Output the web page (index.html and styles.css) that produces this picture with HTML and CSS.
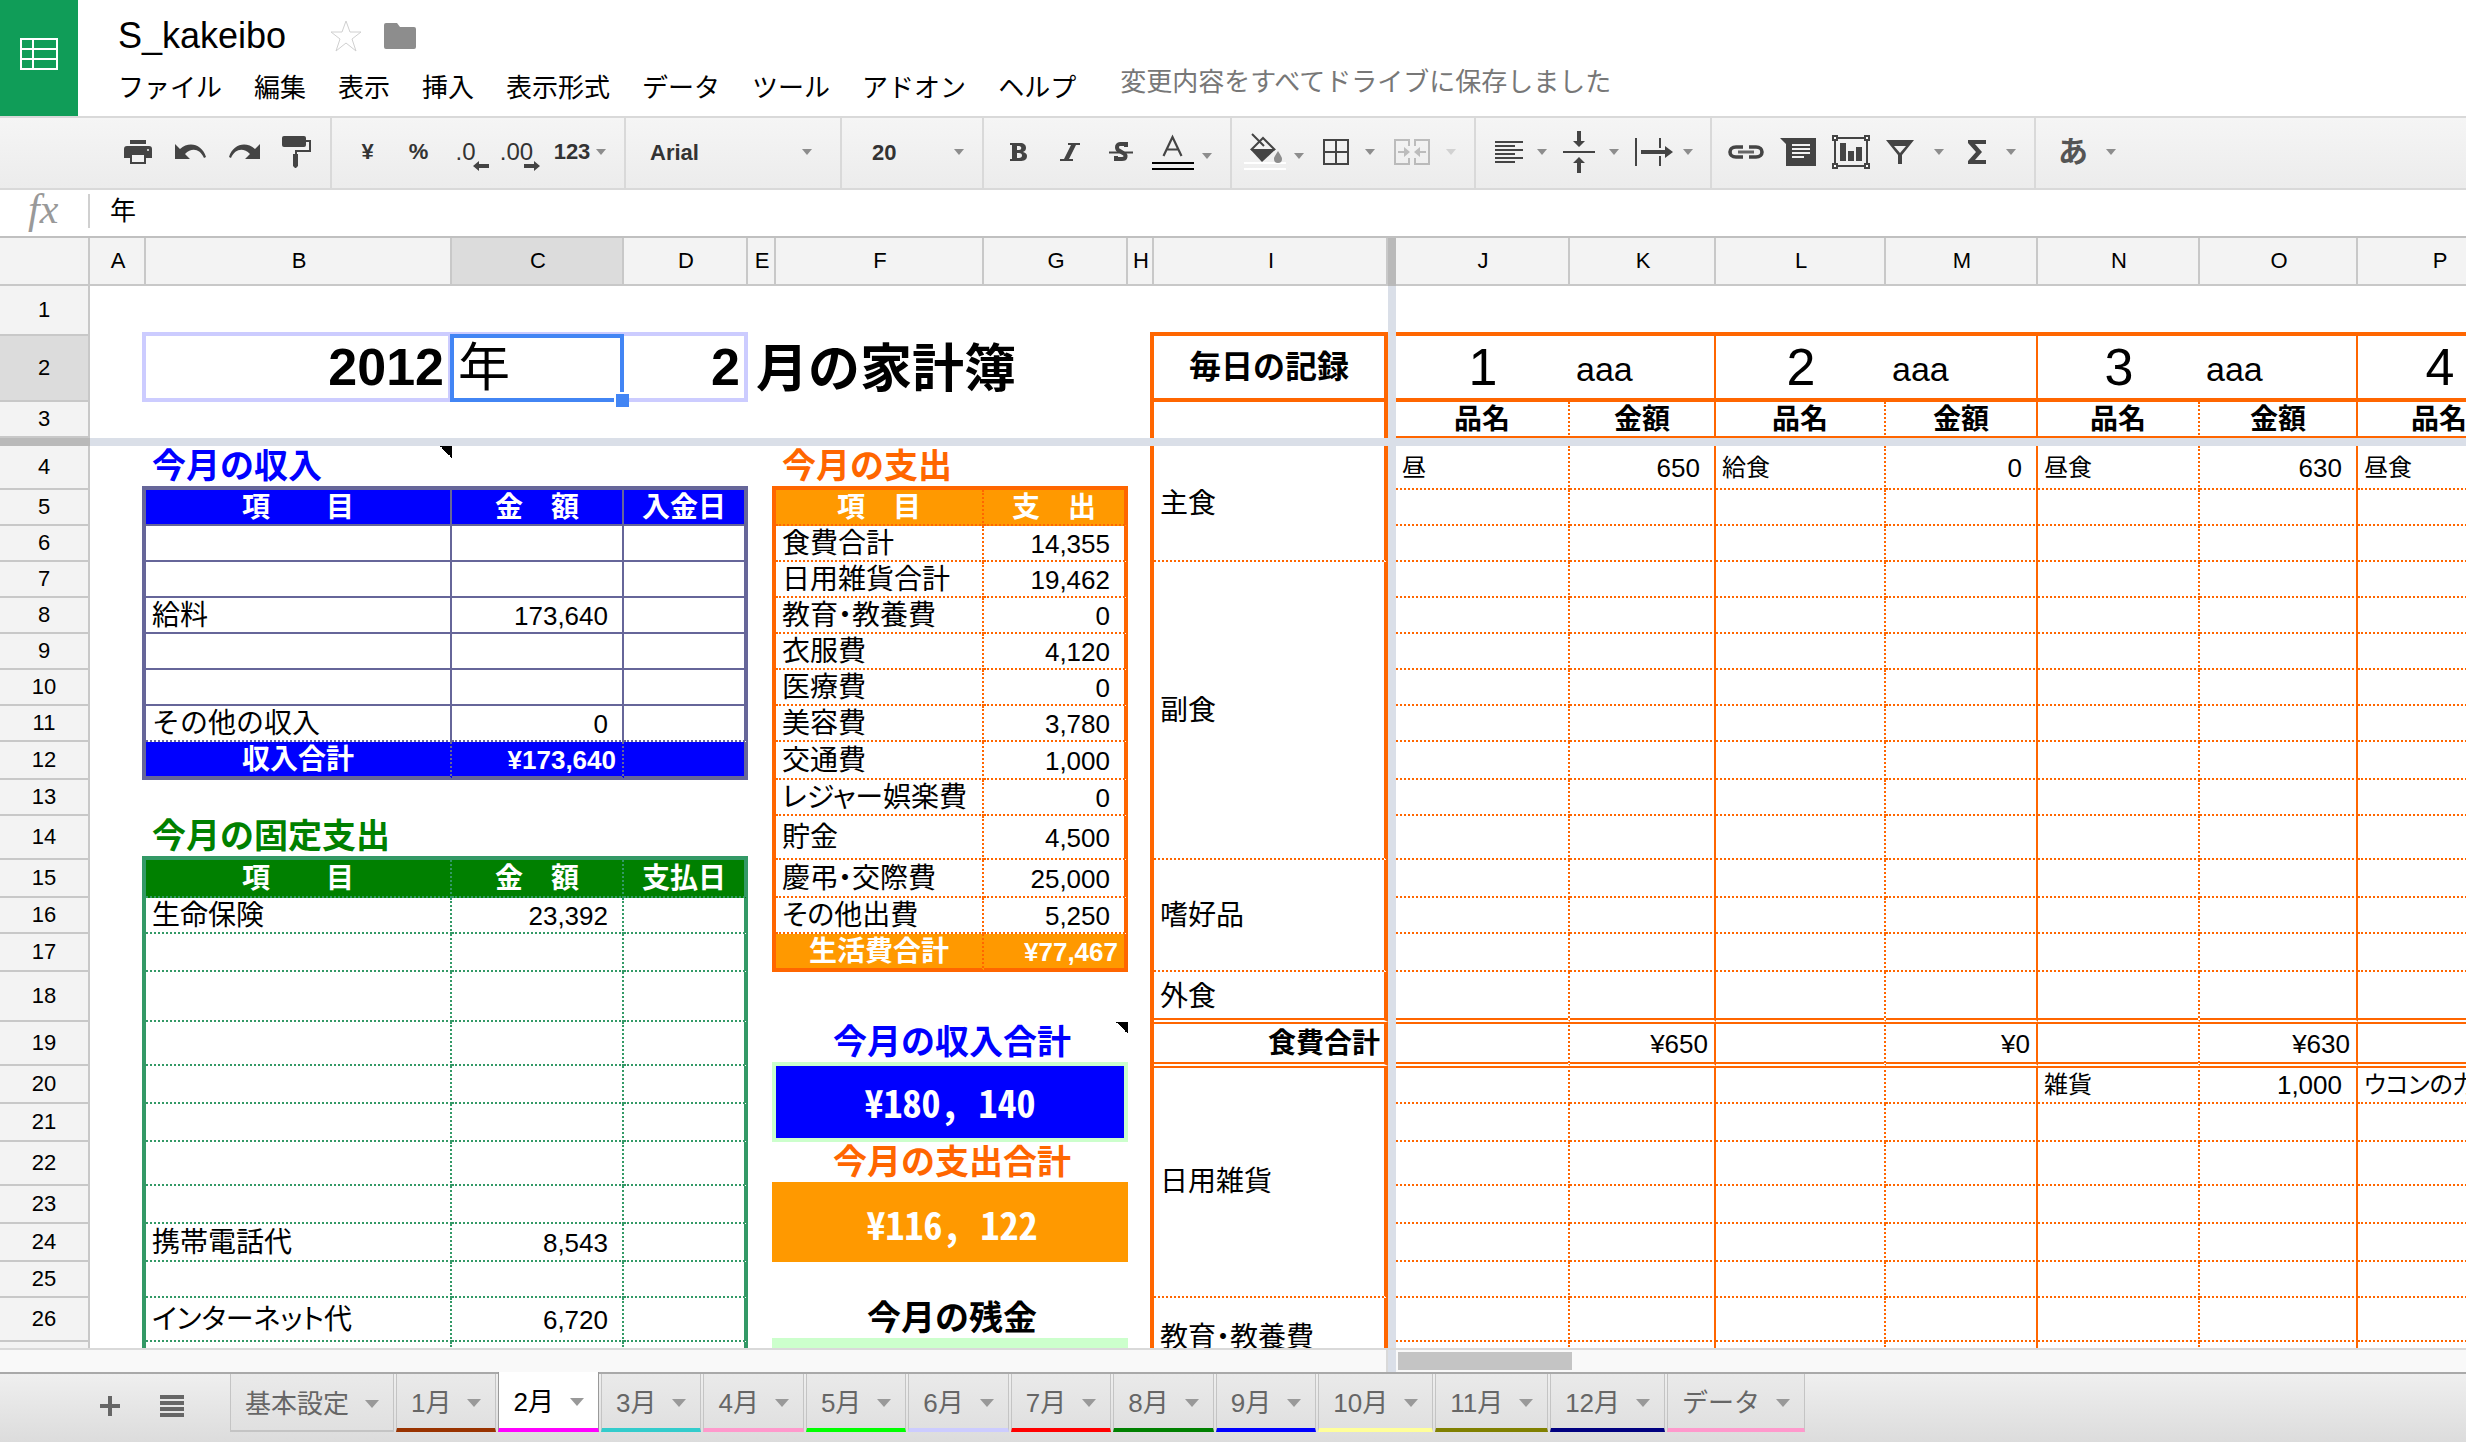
FILE: index.html
```html
<!DOCTYPE html>
<html lang="ja">
<head>
<meta charset="utf-8">
<title>S_kakeibo</title>
<link rel="stylesheet" href="styles.css">
</head>
<body>
<header class="top">
  <a class="home" href="#" aria-label="ホーム">
    <svg width="38" height="32" viewBox="0 0 38 32"><path d="M1 1h36v30H1zM1 11h36M1 21h36M13 1v30" fill="none" stroke="#fff" stroke-width="2"/></svg>
  </a>
  <div class="head">
    <div class="title-row">
      <h1>S_kakeibo</h1>
      <button class="plain" aria-label="スター"><svg width="32" height="32" viewBox="0 0 32 32"><path d="M16 1l4 11h11l-9 7 4 12-10-8-10 8 4-12-9-7h11z" fill="#fff" stroke="#d0d0d0" stroke-width="1"/></svg></button>
      <button class="plain" aria-label="フォルダ"><svg width="32" height="26" viewBox="0 0 32 26"><path d="M2 0h11l3 4h14a2 2 0 0 1 2 2v18a2 2 0 0 1-2 2H2a2 2 0 0 1-2-2V2a2 2 0 0 1 2-2z" fill="#8d8d8d"/></svg></button>
    </div>
    <nav class="menu">
      <button>ファイル</button><button>編集</button><button>表示</button><button>挿入</button><button>表示形式</button><button>データ</button><button>ツール</button><button>アドオン</button><button>ヘルプ</button>
      <span class="saved">変更内容をすべてドライブに保存しました</span>
    </nav>
  </div>
</header>

<div class="toolbar">
  <div class="group g-file">
    <button aria-label="印刷"><svg width="28" height="24" viewBox="0 0 28 24"><path d="M6 0h16v4H6zM3 6h22a3 3 0 0 1 3 3v9h-6v-4H6v4H0V9a3 3 0 0 1 3-3z" fill="#444"/><path d="M7 14h14v9H7z" fill="#f3f3f3" stroke="#444" stroke-width="2"/><circle cx="24" cy="10" r="1" fill="#f3f3f3"/></svg></button>
    <button aria-label="元に戻す"><svg width="32" height="16" viewBox="0 0 32 16"><path d="M0 0l5 5C14-3 27 0 31 13l-2 1C25 5 17 3 10 10l5 5H0z" fill="#444"/></svg></button>
    <button aria-label="やり直し"><svg width="32" height="16" viewBox="0 0 32 16"><path d="M32 0l-5 5C18-3 5 0 1 13l2 1C7 5 15 3 22 10l-5 5h15z" fill="#444"/></svg></button>
    <button aria-label="書式を貼り付け"><svg width="30" height="32" viewBox="0 0 30 32"><path d="M2 0h20a2 2 0 0 1 2 2v7a2 2 0 0 1-2 2H2a2 2 0 0 1-2-2V2a2 2 0 0 1 2-2z" fill="#444"/><path d="M24 5h4v10H14v4" fill="none" stroke="#444" stroke-width="2"/><path d="M11 18h5v12l-2 2h-1l-2-2z" fill="#444"/></svg></button>
  </div>
  <div class="group g-num">
    <button>¥</button>
    <button>%</button>
    <button class="dec" aria-label="小数点以下の桁数を減らす">.0<svg width="16" height="10" viewBox="0 0 16 10"><path d="M0 5l6-5v3h10v4H6v3z" fill="#444"/></svg></button>
    <button class="dec" aria-label="小数点以下の桁数を増やす">.00<svg width="16" height="10" viewBox="0 0 16 10"><path d="M16 5l-6-5v3H0v4h10v3z" fill="#444"/></svg></button>
    <button class="fmt">123<i class="arr"></i></button>
  </div>
  <div class="group"><label class="pick font"><select aria-label="フォント"><option>Arial</option></select><i class="arr"></i></label></div>
  <div class="group"><label class="pick size"><select aria-label="フォントサイズ"><option>20</option></select><i class="arr"></i></label></div>
  <div class="group g-text">
    <button aria-label="太字"><svg width="18" height="20" viewBox="0 0 18 20"><path fill-rule="evenodd" d="M0 1h10c4 0 6 2 6 5 0 2-1 3-3 4 3 1 4 2 4 4 0 4-3 5-7 5H0v-2h2V3H0zM7 4v4h2c3 0 3-4 0-4zM7 11v5h2c4 0 4-5 0-5z" fill="#444"/></svg></button>
    <button aria-label="斜体"><svg width="20" height="18" viewBox="0 0 20 18"><path d="M8 0h12v2h-4L9 16h4v2H0v-2h4L11 2H8z" fill="#444"/></svg></button>
    <button aria-label="取り消し線"><svg width="24" height="20" viewBox="0 0 24 20"><path d="M17 5V2h-6c-4 0-4 6 0 7l3 2c4 2 3 6-1 6H7v-3" fill="none" stroke="#444" stroke-width="4"/><path d="M0 9.500h24v2H0z" fill="#444"/></svg></button>
    <button class="drop low" aria-label="テキストの色"><svg width="36" height="36" viewBox="0 0 36 36"><path d="M11.500 22L20.500 3L29.500 22M14.500 15.500h12" fill="none" stroke="#444" stroke-width="2.200"/><path d="M0 28h42v2H0zM0 34h42v2H0z"/></svg><i class="arr"></i></button>
  </div>
  <div class="group g-fill">
    <button class="drop low" aria-label="塗りつぶしの色"><svg width="36" height="36" viewBox="0 0 36 36"><path d="M0 28h42v2H0zM0 34h42v2H0z" fill="#fff"/><path d="M6 15h26L18 28z" fill="#444"/><path d="M7 16L19 4l12 12M8 0l12 12" fill="none" stroke="#444" stroke-width="2"/><path d="M34 17c3 5 4 6 4 8a4 4 0 0 1-8 0c0-2 1-3 4-8z" fill="#8d8d8d"/></svg><i class="arr"></i></button>
    <button class="drop" aria-label="枠線"><svg width="28" height="26" viewBox="0 0 28 26"><path d="M1 1h24v24H1zM13 1v24M1 13h24" fill="none" stroke="#444" stroke-width="2"/></svg><i class="arr"></i></button>
    <button class="drop off" disabled aria-label="セルを結合"><svg width="38" height="26" viewBox="0 0 38 26"><path d="M15 7V1H1v24h14v-6M21 7V1h14v24H21v-6M4 13h7M32 13h-7" fill="none" stroke="#444" stroke-width="2"/><path d="M10 8l6 5-6 5zM26 8l-6 5 6 5z" fill="#444"/></svg><i class="arr"></i></button>
  </div>
  <div class="group g-align">
    <button class="drop" aria-label="横方向の配置"><svg width="28" height="22" viewBox="0 0 28 22"><path d="M0 1h28M0 5h20M0 9h28M0 13h20M0 17h28M0 21h20" stroke="#444" stroke-width="2"/></svg><i class="arr"></i></button>
    <button class="drop" aria-label="縦方向の配置"><svg width="32" height="42" viewBox="0 0 32 42"><path d="M0 20h32v2H0zM14 0h4v10h4l-6 6-6-6h4zM14 42h4V32h4l-6-6-6 6h4z" fill="#444"/></svg><i class="arr"></i></button>
    <button class="drop" aria-label="テキストの折り返し"><svg width="34" height="28" viewBox="0 0 34 28"><path d="M0 0h2v28H0zM24 0h2v10h-2zM24 18h2v10h-2zM6 12h24V8l8 6-8 6v-4H6z" fill="#444"/></svg><i class="arr"></i></button>
  </div>
  <div class="group g-insert">
    <button aria-label="リンクを挿入"><svg width="36" height="14" viewBox="0 0 36 14"><path d="M15 2H8C0 2 0 12 8 12h7M21 2h7c8 0 8 10 0 10h-7" fill="none" stroke="#444" stroke-width="3.600"/><path d="M10 5.500h16v3H10z" fill="#666"/></svg></button>
    <button aria-label="コメントを挿入"><svg width="36" height="28" viewBox="0 0 36 28"><path d="M0 0h36v28H6V6z" fill="#444"/><path d="M12 7h18M12 11h18M12 15h18M12 19h12" stroke="#f3f3f3" stroke-width="2"/></svg></button>
    <button aria-label="グラフを挿入"><svg width="38" height="34" viewBox="0 0 38 34"><path d="M3 3h32v28H3z" fill="none" stroke="#444" stroke-width="2"/><path d="M8 8h6v18H8zM16 16h6v10h-6zM24 12h6v14h-6z" fill="#444"/><path d="M1 1h4v4H1zM33 1h4v4h-4zM1 29h4v4H1zM33 29h4v4h-4z" fill="#fff" stroke="#444" stroke-width="2"/></svg></button>
    <button class="drop" aria-label="フィルタ"><svg width="34" height="24" viewBox="0 0 34 24"><path fill-rule="evenodd" d="M0 0h28L16 15v9h-4v-9zM8 6l6 7 6-7z" fill="#444"/></svg><i class="arr"></i></button>
    <button class="drop" aria-label="関数"><svg width="32" height="24" viewBox="0 0 32 24"><path d="M8 0h18v4H15l7 8-7 8h11v4H8v-3l8-9-8-9z" fill="#444"/></svg><i class="arr"></i></button>
  </div>
  <div class="group g-input"><button class="drop kana" aria-label="入力ツール"><span>あ</span><i class="arr"></i></button></div>
</div>

<div class="formula">
  <label for="fx">fx</label>
  <input id="fx" value="年">
</div>

<main class="sheet">
<table>
<colgroup><col class="w-head"><col class="w-a"><col class="w-b"><col class="w-c"><col class="w-d"><col class="w-e"><col class="w-f"><col class="w-g"><col class="w-h"><col class="w-i"><col class="w-fz"><col class="w-j"><col class="w-k"><col class="w-l"><col class="w-m"><col class="w-n"><col class="w-o"><col class="w-p"></colgroup>
<thead>
<tr><th></th><th>A</th><th>B</th><th class="sel">C</th><th>D</th><th>E</th><th>F</th><th>G</th><th>H</th><th>I</th><th class="fz"></th><th>J</th><th>K</th><th>L</th><th>M</th><th>N</th><th>O</th><th>P</th></tr>
</thead>
<tbody>
<tr class="h50 r1"><th>1</th><td class="corner t-lav"></td><td class="b4 lav"></td><td class="b4 lav"></td><td class="b4 lav"></td><td></td><td></td><td></td><td class="corner orange"></td><td class="b4 org"></td><td class="fz"></td><td></td><td></td><td></td><td></td><td></td><td></td><td></td></tr>
<tr class="h66 r2"><th class="sel">2</th><td class="r4 lav"></td><td class="b4 r4 lav num">2012</td><td class="cur b4 lav">年<i class="cursor"></i><i class="handle"></i></td><td class="b4 r4 lav num">2</td><td class="over" colspan="3">月の家計簿</td><td class="r4 org"></td><td class="daily b4 r4 org">毎日の記録</td><td class="fz"></td><td>1</td><td>aaa</td><td>2</td><td>aaa</td><td>3</td><td>aaa</td><td>4</td></tr>
<tr class="h36 r3 day"><th>3</th><td></td><td></td><td></td><td></td><td></td><td></td><td></td><td class="r4 org"></td><td class="r4 org"></td><td class="fz"></td><td>品名</td><td>金額</td><td>品名</td><td>金額</td><td>品名</td><td>金額</td><td>品名</td></tr>
<tr class="h8 freeze"><th></th><td colspan="17"></td></tr>
<tr class="h44 day"><th>4</th><td class="corner t-navy"></td><td class="cap blue b4 navy note">今月の収入</td><td class="b4 navy"></td><td class="b4 navy"></td><td class="corner orange"></td><td class="cap orange b4 org">今月の支出</td><td class="b4 org"></td><td class="r4 org"></td><td class="cat" rowspan="3">主食</td><td class="fz"></td><td>昼</td><td>650</td><td>給食</td><td>0</td><td>昼食</td><td>630</td><td>昼食</td></tr>
<tr class="h36 inc exp hd day"><th>5</th><td></td><td>項　　目</td><td>金　額</td><td>入金日</td><td></td><td>項　目</td><td>支　出</td><td class="r4 org"></td><td class="fz"></td><td></td><td></td><td></td><td></td><td></td><td></td><td></td></tr>
<tr class="h36 inc exp day"><th>6</th><td></td><td></td><td></td><td></td><td></td><td>食費合計</td><td>14,355</td><td class="r4 org"></td><td class="fz"></td><td></td><td></td><td></td><td></td><td></td><td></td><td></td></tr>
<tr class="h36 inc exp day"><th>7</th><td></td><td></td><td></td><td></td><td></td><td>日用雑貨合計</td><td>19,462</td><td class="r4 org"></td><td class="cat" rowspan="8">副食</td><td class="fz"></td><td></td><td></td><td></td><td></td><td></td><td></td><td></td></tr>
<tr class="h36 inc exp day"><th>8</th><td></td><td>給料</td><td>173,640</td><td></td><td></td><td class="kana-fit">教育・教養費</td><td>0</td><td class="r4 org"></td><td class="fz"></td><td></td><td></td><td></td><td></td><td></td><td></td><td></td></tr>
<tr class="h36 inc exp day"><th>9</th><td></td><td></td><td></td><td></td><td></td><td>衣服費</td><td>4,120</td><td class="r4 org"></td><td class="fz"></td><td></td><td></td><td></td><td></td><td></td><td></td><td></td></tr>
<tr class="h36 inc exp day"><th>10</th><td></td><td></td><td></td><td></td><td></td><td>医療費</td><td>0</td><td class="r4 org"></td><td class="fz"></td><td></td><td></td><td></td><td></td><td></td><td></td><td></td></tr>
<tr class="h36 inc last exp day"><th>11</th><td></td><td>その他の収入</td><td>0</td><td></td><td></td><td>美容費</td><td>3,780</td><td class="r4 org"></td><td class="fz"></td><td></td><td></td><td></td><td></td><td></td><td></td><td></td></tr>
<tr class="h38 inc sum exp day"><th>12</th><td></td><td>収入合計</td><td>¥173,640</td><td></td><td></td><td>交通費</td><td>1,000</td><td class="r4 org"></td><td class="fz"></td><td></td><td></td><td></td><td></td><td></td><td></td><td></td></tr>
<tr class="h36 exp day"><th>13</th><td></td><td></td><td></td><td></td><td></td><td class="kana-fit">レジャー娯楽費</td><td>0</td><td class="r4 org"></td><td class="fz"></td><td></td><td></td><td></td><td></td><td></td><td></td><td></td></tr>
<tr class="h44 exp day"><th>14</th><td class="corner t-grn"></td><td class="cap green b4 grn">今月の固定支出</td><td class="b4 grn"></td><td class="b4 grn"></td><td></td><td>貯金</td><td>4,500</td><td class="r4 org"></td><td class="fz"></td><td></td><td></td><td></td><td></td><td></td><td></td><td></td></tr>
<tr class="h38 fix fhd exp day"><th>15</th><td></td><td>項　　目</td><td>金　額</td><td>支払日</td><td></td><td class="kana-fit">慶弔・交際費</td><td>25,000</td><td class="r4 org"></td><td class="cat" rowspan="3">嗜好品</td><td class="fz"></td><td></td><td></td><td></td><td></td><td></td><td></td><td></td></tr>
<tr class="h36 fix exp day"><th>16</th><td></td><td>生命保険</td><td>23,392</td><td></td><td></td><td class="kana-fit">その他出費</td><td>5,250</td><td class="r4 org"></td><td class="fz"></td><td></td><td></td><td></td><td></td><td></td><td></td><td></td></tr>
<tr class="h38 fix exp esum day"><th>17</th><td></td><td></td><td></td><td></td><td></td><td>生活費合計</td><td>¥77,467</td><td class="r4 org"></td><td class="fz"></td><td></td><td></td><td></td><td></td><td></td><td></td><td></td></tr>
<tr class="h50 fix day dbl"><th>18</th><td></td><td></td><td></td><td></td><td></td><td></td><td></td><td class="r4 org"></td><td class="cat">外食</td><td class="fz"></td><td></td><td></td><td></td><td></td><td></td><td></td><td></td></tr>
<tr class="h44 fix day dbl after total"><th>19</th><td></td><td></td><td></td><td></td><td class="corner t-mint"></td><td class="cap mid blue b4 mint note" colspan="2">今月の収入合計</td><td class="r4 org"></td><td class="cat tot">食費合計</td><td class="fz"></td><td></td><td>¥650</td><td></td><td>¥0</td><td></td><td>¥630</td><td></td></tr>
<tr class="h38 fix day after"><th>20</th><td></td><td></td><td></td><td></td><td class="r4 mint"></td><td class="big inbox b4 r4 mint" colspan="2" rowspan="2">¥180, 140</td><td class="r4 org"></td><td class="cat" rowspan="6">日用雑貨</td><td class="fz"></td><td></td><td></td><td></td><td></td><td>雑貨</td><td>1,000</td><td class="kana-fit">ウコンの力</td></tr>
<tr class="h38 fix day"><th>21</th><td></td><td></td><td></td><td></td><td class="r4 mint"></td><td class="r4 org"></td><td class="fz"></td><td></td><td></td><td></td><td></td><td></td><td></td><td></td></tr>
<tr class="h44 fix day"><th>22</th><td></td><td></td><td></td><td></td><td class="corner t-amber"></td><td class="cap mid orange b4 amber" colspan="2">今月の支出合計</td><td class="r4 org"></td><td class="fz"></td><td></td><td></td><td></td><td></td><td></td><td></td><td></td></tr>
<tr class="h38 fix day"><th>23</th><td></td><td></td><td></td><td></td><td class="r4 amber"></td><td class="big outbox" colspan="2" rowspan="2">¥116, 122</td><td class="r4 org"></td><td class="fz"></td><td></td><td></td><td></td><td></td><td></td><td></td><td></td></tr>
<tr class="h38 fix day"><th>24</th><td></td><td>携帯電話代</td><td>8,543</td><td></td><td class="r4 amber"></td><td class="r4 org"></td><td class="fz"></td><td></td><td></td><td></td><td></td><td></td><td></td><td></td></tr>
<tr class="h36 fix day"><th>25</th><td></td><td></td><td></td><td></td><td></td><td colspan="2"></td><td class="r4 org"></td><td class="fz"></td><td></td><td></td><td></td><td></td><td></td><td></td><td></td></tr>
<tr class="h44 fix day"><th>26</th><td></td><td class="kana-fit">インターネット代</td><td>6,720</td><td></td><td class="corner t-mint"></td><td class="cap mid b4 mint" colspan="2">今月の残金</td><td class="r4 org"></td><td class="cat kana-fit" rowspan="2">教育・教養費</td><td class="fz"></td><td></td><td></td><td></td><td></td><td></td><td></td><td></td></tr>
<tr class="h36 fix day"><th></th><td></td><td></td><td></td><td></td><td class="r4 mint"></td><td class="rest" colspan="2"></td><td class="r4 org"></td><td class="fz"></td><td></td><td></td><td></td><td></td><td></td><td></td><td></td></tr>
</tbody>
</table>
</main>

<div class="hscroll"><div class="locked"></div><div class="split"></div><div class="track"><div class="thumb"></div></div></div>

<footer class="tabs">
  <button class="plain add" aria-label="シートを追加"><svg width="20" height="20" viewBox="0 0 20 20"><path d="M10 0v20M0 10h20" stroke="#666" stroke-width="4"/></svg></button>
  <button class="plain all" aria-label="すべてのシート"><svg width="24" height="22" viewBox="0 0 24 22"><path d="M0 2h24M0 8h24M0 14h24M0 20h24" stroke="#666" stroke-width="4"/></svg></button>
  <button class="tab">基本設定<i></i></button>
  <button class="tab c1">1月<i></i></button>
  <button class="tab c2 active">2月<i></i></button>
  <button class="tab c3">3月<i></i></button>
  <button class="tab c4">4月<i></i></button>
  <button class="tab c5">5月<i></i></button>
  <button class="tab c6">6月<i></i></button>
  <button class="tab c7">7月<i></i></button>
  <button class="tab c8">8月<i></i></button>
  <button class="tab c9">9月<i></i></button>
  <button class="tab c10">10月<i></i></button>
  <button class="tab c11">11月<i></i></button>
  <button class="tab c12">12月<i></i></button>
  <button class="tab c4">データ<i></i></button>
</footer>
</body>
</html>
```
FILE: styles.css
```css
* { box-sizing: border-box; }
body {
  margin: 0;
  height: 100vh;
  display: flex;
  flex-direction: column;
  overflow: hidden;
  background: #fff;
  color: #000;
  font-family: "Liberation Sans", "Noto Sans CJK JP", sans-serif;
  font-size: 26px;
}
button, select, input { font: inherit; color: inherit; border: 0; background: none; padding: 0; margin: 0; outline: 0; border-radius: 0; }
svg { display: block; overflow: visible; flex: none; }

/* Title and menus */
.top { display: flex; flex: none; height: 118px; border-bottom: 2px solid #d9d9d9; }
.home { width: 78px; background: #109d58; display: flex; align-items: center; justify-content: center; padding-bottom: 8px; }
.head { padding-left: 40px; padding-top: 14px; }
.title-row { display: flex; align-items: center; height: 44px; }
h1 { font-size: 36px; font-weight: 400; line-height: 44px; margin: 0 44px 0 0; }
.title-row .plain { margin-right: 22px; }
.menu { display: flex; gap: 32px; line-height: 32px; padding-top: 14px; white-space: nowrap; }
.saved { color: #777; margin-left: 12px; margin-top: -6px; }

/* Toolbar */
.toolbar { display: flex; flex: none; height: 72px; background: linear-gradient(#f5f5f5, #ececec); border-bottom: 2px solid #d9d9d9; font-size: 22px; font-weight: 700; color: #333; }
.group { display: flex; align-items: center; border-right: 2px solid #d9d9d9; }
.group button { display: flex; align-items: center; justify-content: center; height: 100%; padding-bottom: 2px; }
.group:last-child { border-right: 0; }
.arr { width: 0; height: 0; border: 5px solid transparent; border-top: 6px solid #8d8d8d; border-bottom: 0; flex: none; }
.g-file { padding: 0 7px 0 111px; }
.g-file button { width: 53px; }
.g-num { padding: 0 10px; }
.g-num button { width: 51px; }
.g-num .fmt { width: 68px; gap: 6px; }
.g-num .dec { position: relative; font-size: 24px; font-weight: 400; padding-right: 8px; }
.dec svg { position: absolute; right: 6px; top: 43px; }
.pick { display: flex; align-items: center; height: 100%; padding-bottom: 2px !important; }
.pick select { appearance: none; font-weight: 700; flex: 1; }
.font { width: 214px; padding: 0 28px 0 24px; }
.size { width: 140px; padding: 0 18px 0 30px; }
.g-text { padding: 0 12px 0 9px; }
.g-text button { width: 51px; }
.group .drop { gap: 14px; width: auto; }
.g-text .drop { padding: 0 6px 2px; }
.group .low .arr { margin-top: 8px; }
.g-fill { padding: 0 18px 0 12px; gap: 19px; }
.g-align { padding: 0 17px 0 19px; gap: 16px; }
.g-insert { padding: 0 18px 0 16px; gap: 16px; }
.g-input { padding-left: 22px; }
.kana span { width: 34px; font-size: 30px; line-height: 40px; text-align: left; color: #555; }
.off { opacity: .3; }

/* Formula bar */
.formula { display: flex; flex: none; height: 48px; align-items: center; padding-bottom: 4px; border-bottom: 2px solid #c0c0c0; }
.formula label { width: 90px; height: 34px; padding-left: 28px; border-right: 2px solid #d0d0d0; color: #999; font: italic 42px/30px "Liberation Serif", serif; }
.formula input { flex: 1; padding-left: 20px; height: 40px; font-size: 26px; line-height: 40px; }

/* Grid */
.sheet { flex: 1; min-height: 0; overflow: hidden; }
table { border-collapse: separate; border-spacing: 0; table-layout: fixed; width: 2522px; line-height: 30px; white-space: nowrap; }
.w-head { width: 90px; } .w-a { width: 56px; } .w-b { width: 306px; } .w-c { width: 172px; } .w-d { width: 124px; }
.w-e { width: 28px; } .w-f { width: 208px; } .w-g { width: 144px; } .w-h { width: 26px; } .w-i { width: 234px; }
.w-fz { width: 8px; } .w-j { width: 174px; } .w-k { width: 146px; } .w-l { width: 170px; } .w-m { width: 152px; }
.w-n { width: 162px; } .w-o { width: 158px; } .w-p { width: 164px; }
th, td { padding: 0; overflow: hidden; vertical-align: middle; }
th { background: #f3f3f3; border: 0 solid #c8c8c8; border-width: 0 2px 2px 0; font-size: 22px; font-weight: 400; line-height: 26px; }
thead tr { height: 48px; }
thead th { padding-left: 2px; }
th.sel { background: #dcdcdc; }
th.fz { background: #b9b9b9; border-color: #b9b9b9; border-right: 0; }
td { border: 0 solid transparent; padding: 2px 6px 0; font-size: 28px; }
td.fz { background: #dadfe8; padding: 0; }
.h8 { height: 8px; line-height: 0; } .h36 { height: 36px; } .h38 { height: 38px; } .h44 { height: 44px; } .h50 { height: 50px; } .h66 { height: 66px; }
.freeze th { background: #b9b9b9; border: 0; line-height: 0; }
.freeze td { background: #dadfe8; padding: 0; }

.r4 { border-right: 4px solid; }
.b4 { border-bottom: 4px solid; }
.lav { border-color: #ccf; } .org { border-color: #f60; } .navy { border-color: #669; } .grn { border-color: #396; } .mint { border-color: #cfc; } .amber { border-color: #f90; }
.t-lav { color: #ccf; } .t-navy { color: #669; } .t-grn { color: #396; } .t-mint { color: #cfc; } .t-amber { color: #f90; }
.blue { color: #00f; } .orange { color: #f60; } .green { color: #008000; }
/* Outer corner where a box's top and left borders meet */
.corner { background: linear-gradient(currentColor, currentColor) right bottom / 4px 4px no-repeat; }

/* Year and month heading */
.r2 td { font-size: 52px; line-height: 56px; padding: 0 6px; }
.r2 .num { text-align: right; font-weight: 700; padding: 0 4px; }
.r2 .over { font-weight: 700; padding: 0 8px; }
.r2 .cur { position: relative; overflow: visible; padding-top: 2px; }
.cursor { position: absolute; inset: -2px 0 -4px -2px; border: 4px solid #4285f4; }
.handle { position: absolute; right: -5px; bottom: -9px; width: 15px; height: 15px; background: #4285f4; border: 2px solid #fff; border-right: 0; border-bottom: 0; }
.r2 .daily { font-size: 32px; font-weight: 700; text-align: center; }

td.cap { font-size: 34px; font-weight: 700; line-height: 38px; padding-top: 0; }
.mid { text-align: center; }
.note { background: linear-gradient(to top right, transparent 50%, #000 50%) right top / 12px 12px no-repeat; }

/* Income, fixed costs and living costs */
.inc td:nth-child(2) { border-right: 4px solid #669; }
.inc td:nth-child(n+3):nth-child(-n+5) { border: 0 solid #669; border-width: 0 2px 2px 0; }
.inc td:nth-child(5) { border-right-width: 4px !important; }
.inc.last td:nth-child(n+3):nth-child(-n+5) { border-bottom-style: dotted; }
.inc.sum td:nth-child(n+3):nth-child(-n+5) { border-bottom-width: 4px; border-right-style: dotted; background: #00f; color: #fff; font-weight: 700; }
.inc.sum td:nth-child(5) { border-right-style: solid !important; }
.inc.sum td:nth-child(3) { text-align: center; }
.fix td:nth-child(2) { border-right: 4px solid #396; }
.fix td:nth-child(n+3):nth-child(-n+5) { border: 0 dotted #396; border-width: 0 2px 2px 0; }
.fix td:nth-child(5) { border-right: 4px solid #396 !important; }
.inc td:nth-child(4), .fix td:nth-child(4) { text-align: right; font-size: 26px; padding-right: 14px; }
.exp td:nth-child(6) { border-right: 4px solid #f60; }
.exp td:nth-child(7) { border: 0 dotted #f60; border-width: 0 2px 2px 0; }
.exp td:nth-child(8) { border-right: 4px solid #f60; border-bottom: 2px dotted #f60; text-align: right; font-size: 26px; padding-right: 14px; }
.hd td:nth-child(n+3):nth-child(-n+8), .fhd td:nth-child(n+3):nth-child(-n+5) { color: #fff; font-size: 28px; font-weight: 700; text-align: center; padding: 2px 0 0; }
.hd td:nth-child(n+3):nth-child(-n+5) { background: #00f; }
.hd td:nth-child(7), .hd td:nth-child(8) { background: #f90; }
.fhd td:nth-child(n+3):nth-child(-n+5) { background: #008000; }
.inc.sum td:nth-child(4) { padding-right: 6px; }
.esum td:nth-child(7), .esum td:nth-child(8) { background: #f90; color: #fff; font-weight: 700; border-bottom: 4px solid #f60; }
.esum td:nth-child(7) { text-align: center; }
.esum td:nth-child(8) { padding-right: 6px; }
.kana-fit { font-feature-settings: "palt"; }
.big { color: #fff; font: 700 38px/44px "Noto Sans CJK JP", sans-serif; font-feature-settings: "hwid"; text-align: center; padding-top: 0; }
.inbox { background: #00f; }
.outbox { background: #f90; }
.rest { background: #cfc; }

/* Daily records */
td.cat { border-right: 4px solid #f60; border-bottom: 2px dotted #f60; }
td.tot { text-align: right; font-weight: 700; padding-right: 4px; }
.day td:nth-last-child(-n+7) { border: 0 dotted #f60; border-width: 0 2px 2px 0; font-size: 24px; }
.day td:nth-last-child(6), .day td:nth-last-child(4), .day td:nth-last-child(2) { border-right-style: solid !important; text-align: right; font-size: 26px !important; padding-right: 14px; }
.r1 td:nth-last-child(-n+7), .r2 td:nth-last-child(-n+7) { border-bottom: 4px solid #f60; }
.r2 td:nth-last-child(-n+7) { text-align: center; }
.r2 td:nth-last-child(6), .r2 td:nth-last-child(4), .r2 td:nth-last-child(2) { border-right: 2px solid #f60; text-align: left; font-size: 34px; padding-top: 4px; }
.r3 td:nth-last-child(-n+7) { border-bottom-style: solid; text-align: center; font-size: 28px !important; font-weight: 700; padding: 2px 0 0; }
.dbl td.cat, .dbl td:nth-last-child(-n+7) { border-bottom: 2px solid #fff; box-shadow: inset 0 -2px #f60; }
.after td.cat, .after td:nth-last-child(-n+7) { border-top: 2px solid #f60; padding-top: 0; }
.total td:nth-last-child(6), .total td:nth-last-child(4), .total td:nth-last-child(2) { padding-right: 6px; }

/* Scroll bar */
.hscroll { display: flex; flex: none; height: 26px; border-top: 2px solid #d9d9d9; border-bottom: 2px solid #a9a9a9; background: #f9f9f9; }
.locked { width: 1388px; border-right: 2px solid #d9d9d9; }
.split { width: 8px; background: #dadfe8; }
.track { flex: 1; padding: 2px; }
.thumb { width: 174px; height: 18px; background: #c4c4c4; }

/* Sheet tabs */
.tabs { display: flex; flex: none; gap: 2px; height: 68px; background: linear-gradient(#efefef, #dcdcdc); color: #666; line-height: 56px; white-space: nowrap; }
.plain { display: flex; align-items: center; }
.tabs .plain { height: 64px; }
.add { padding-left: 100px !important; }
.all { padding: 0 44px 0 38px !important; }
.tab { display: flex; align-items: center; gap: 16px; height: 58px; padding: 4px 14px 0; border: 0 solid #c4c4c4; border-width: 0 1px 2px; background: linear-gradient(#eaeaea, #e0e0e0); }
.tab i { border: 7px solid transparent; border-top: 8px solid #999; border-bottom: 0; }
.active { background: #fff; color: #000; border-color: #999; margin-top: -2px; height: 60px; }
.tab[class*=" c"] { border-bottom-width: 4px; }
.tab.c1 { border-bottom-color: #930; } .tab.c2 { border-bottom-color: #f0f; } .tab.c3 { border-bottom-color: #3cc; } .tab.c4 { border-bottom-color: #f9c; }
.tab.c5 { border-bottom-color: #0f0; } .tab.c6 { border-bottom-color: #ccf; } .tab.c7 { border-bottom-color: #f00; } .tab.c8 { border-bottom-color: #008000; }
.tab.c9 { border-bottom-color: #00f; } .tab.c10 { border-bottom-color: #ff9; } .tab.c11 { border-bottom-color: #808000; } .tab.c12 { border-bottom-color: #000080; }
```
